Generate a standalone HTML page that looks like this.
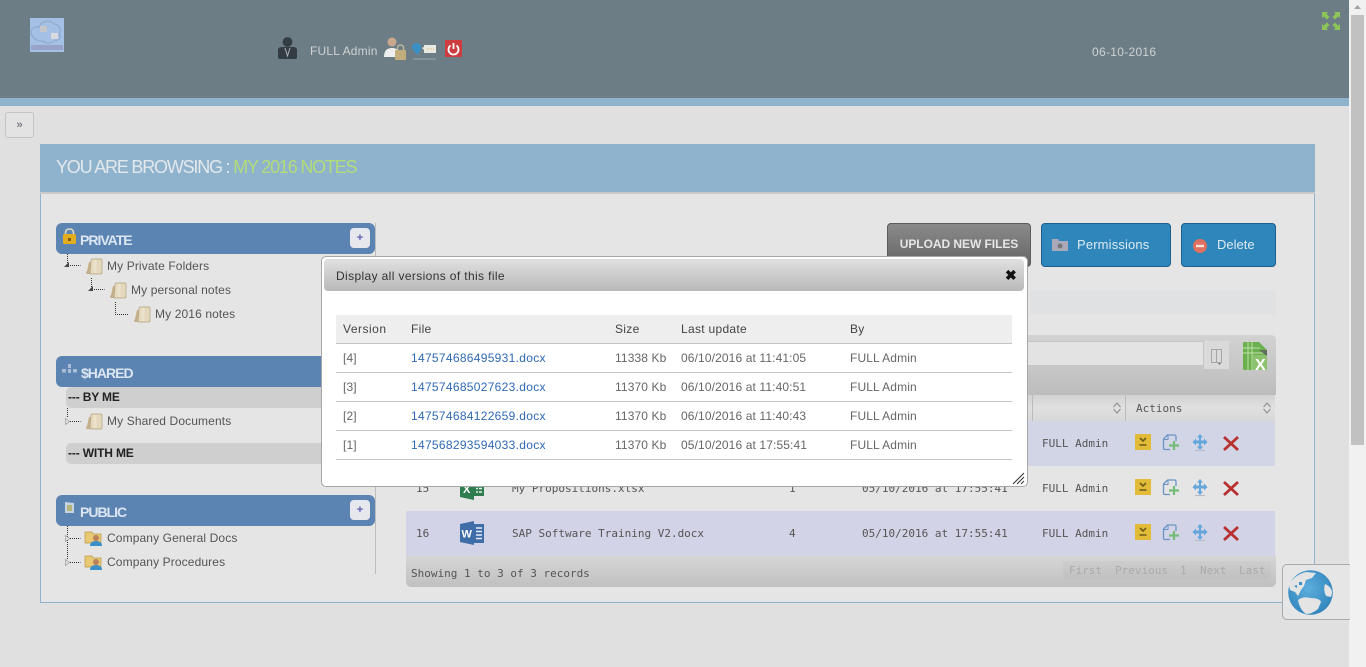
<!DOCTYPE html>
<html><head><meta charset="utf-8"><title>Files</title>
<style>
html,body{margin:0;padding:0;width:1366px;height:667px;overflow:hidden;background:#e0e0e0;font-family:"Liberation Sans",sans-serif;}
.a{position:absolute;white-space:nowrap;}
.bar{position:absolute;left:56px;width:319px;height:31px;background:#5c84b3;border-radius:6px;}
.bt{position:absolute;left:80px;color:#dce6f2;font-weight:bold;font-size:14px;letter-spacing:-1px;}
.plus{position:absolute;left:350px;width:20px;height:20px;background:#e6e8ee;border-radius:4px;color:#5c5cb0;font-size:11px;font-weight:bold;text-align:center;line-height:20px;}
.t{position:absolute;color:#555;font-size:12px;white-space:nowrap;letter-spacing:.12px;}
.sub{position:absolute;left:66px;width:270px;height:21px;background:#cfcfcf;border-radius:5px;color:#222;font-size:12px;font-weight:bold;line-height:21px;text-indent:2px;letter-spacing:-.15px;}
.m{position:absolute;font-family:"DejaVu Sans Mono","Liberation Mono",monospace;font-size:11px;color:#555;white-space:nowrap;}
.row{position:absolute;left:406px;width:869px;height:45px;}
.btn{position:absolute;top:223px;height:42px;background:#2f86ba;border:1px solid #1f5f8c;border-radius:4px;color:#dfeaf2;font-size:13px;line-height:41px;}
.dh{position:absolute;font-size:12px;color:#444;white-space:nowrap;letter-spacing:.3px;}
.dc{position:absolute;font-size:12px;color:#666;white-space:nowrap;letter-spacing:.12px;}
.dl{color:#2f69b5;letter-spacing:.3px;}
.ln{position:absolute;left:336px;width:676px;height:1px;background:#c4c4c4;}
svg{position:absolute;overflow:visible;}
</style></head><body>

<svg width="0" height="0" style="left:0;top:0"><defs>
<g id="fold"><path d="M0 15q0-1 1-2L3 4h3L5 16H1q-1 0-1-1z" fill="#c4b08a"/><path d="M5 2q0-1 1-1h9q1 0 1 1v13q0 1-1 1H4z" fill="#e3d8bd" stroke="#b5a582" stroke-width=".7"/><path d="M9 2v13" stroke="#f2ead6" stroke-width="3" opacity=".6"/></g>
<g id="cfold"><path d="M0 2h7l1 2h8v9H0z" fill="#e8c872" stroke="#b99a48" stroke-width=".7"/><circle cx="11" cy="8" r="3" fill="#b9825c"/><path d="M5 16q0-5 6-5t6 5z" fill="#3d8fc9"/></g>
<g id="acts">
<rect x="0" y="0" width="16" height="16" fill="#e2bb38"/><path d="M5 4l3 3 3-3M4.500 11h7" fill="none" stroke="#6d5a1c" stroke-width="1.600"/>
<path d="M35 15.500h-5q-1.500 0-1.500-1.500V5l4-4h7q1.500 0 1.500 1.500V7" fill="none" stroke="#6b94c4" stroke-width="1.300"/><path d="M29 5.500h4V1" fill="none" stroke="#6b94c4"/>
<path d="M39 7v9M34 11.500h10" stroke="#74bc78" stroke-width="2.200"/>
<path d="M65 0l3 3.500h-2v3h3v-2l3.500 3.500-3.500 3.500v-2h-3v3h2l-3 3.500-3-3.500h2v-3h-3v2L57.500 8 61 4.500v2h3v-3h-2z" fill="#63a6dc"/><path d="M60 16.500h10" stroke="#b6bcc8" stroke-width="1.200"/>
<path d="M89 3l14 13M103 3L89 16" stroke="#b8302f" stroke-width="2.800"/>
</g></defs></svg>

<!-- header -->
<div class="a" style="left:0;top:0;width:1349px;height:98px;background:#6c7d85;"></div>
<div class="a" style="left:0;top:98px;width:1349px;height:8px;background:#8fb3cc;"></div>
<svg style="left:30px;top:18px" width="34" height="34"><rect width="34" height="34" fill="#a4c0e4"/><path d="M1 15c-1-4 4-7 8-6 2-6 11-8 15-3 5 0 8 6 5 10 3 3 0 7-4 6-3 4-9 4-12 1-5 1-11-3-12-8z" fill="none" stroke="#8ea6c4"/><rect x="10" y="8" width="7" height="6" fill="#c5c5cc"/><rect x="21" y="15" width="7" height="6" fill="#d8dae0"/><rect x="1" y="27" width="32" height="5" fill="#97a4c8"/></svg>
<svg style="left:278px;top:37px" width="19" height="23"><circle cx="9.500" cy="5" r="4.900" fill="#333c42"/><path d="M0 13q0-3 4-3h11q4 0 4 3v7q0 2-2 2H2q-2 0-2-2z" fill="#333c42"/><path d="M7 11l2.500 8L12 11" fill="none" stroke="#a9b2b7"/></svg>
<div class="a" style="left:310px;top:44px;color:#cfd3d3;font-size:12px;letter-spacing:.2px;">FULL Admin</div>
<svg style="left:384px;top:37px" width="22" height="23"><circle cx="8" cy="5" r="4.500" fill="#c9a98e"/><path d="M0 20q0-9 8-9t8 9z" fill="#eee"/><path d="M13.500 14v-3q0-3 3-3t3 3v3" fill="none" stroke="#bcb59c" stroke-width="1.500"/><rect x="11" y="13" width="11" height="10" rx="1" fill="#c2ad7c"/></svg>
<svg style="left:412px;top:42px" width="26" height="20"><path d="M0 6q0-5 4.500-5T9 6q0 3-2 4l-.5 3q-4-2-6.500-7z" fill="#3a8fc4"/><path d="M10 6l2-1V3h12v8H12V8z" fill="#e9e9e3"/><path d="M15 7h1.500m1.500 0h1.500m1.500 0h1" stroke="#d8b95a"/><rect x="1" y="16.500" width="23" height="1" fill="#9ba8ae"/></svg>
<svg style="left:445px;top:40px" width="17" height="17"><rect width="17" height="17" fill="#cf3c40"/><path d="M5.500 5.500a5 5 0 1 0 6 0" fill="none" stroke="#fff" stroke-width="1.800"/><path d="M8.500 3v6" stroke="#fff" stroke-width="1.800"/></svg>
<div class="a" style="left:1092px;top:45px;color:#cfd3d3;font-size:12px;letter-spacing:.3px;">06-10-2016</div>
<svg style="left:1322px;top:12px" width="18" height="18"><g fill="#8dc45a"><path d="M0 0h6L4.500 1.800 7.500 5 5 7.500 1.800 4.500 0 6zM18 0v6l-1.800-1.500L13 7.500 10.500 5l3-3.200L12 0zM0 18v-6l1.800 1.500L5 10.500 7.500 13l-3 3.200L6 18zM18 18h-6l1.500-1.800-3-3.200L13 10.500l3.200 3L18 12z"/></g></svg>

<!-- scrollbar -->
<div class="a" style="left:1349px;top:0;width:17px;height:667px;background:#f1f1f1;"></div>
<div class="a" style="left:1351px;top:15px;width:13px;height:430px;background:#c1c1c1;"></div>
<svg style="left:1354px;top:5px" width="8" height="5"><path d="M0 4L3.500 0 7 4z" fill="#a3a3a3"/></svg>

<div class="a" style="left:5px;top:112px;width:27px;height:24px;background:#e3e3e3;border:1px solid #c4c4c4;border-radius:3px;text-align:center;color:#556;font-size:11px;line-height:24px;">»</div>

<!-- panel -->
<div class="a" style="left:40px;top:144px;width:1273px;height:458px;background:#e5e5e5;border:1px solid #8fb3cc;border-top:0;"></div>
<div class="a" style="left:40px;top:144px;width:1275px;height:48px;background:#8fb3cc;border-bottom:2px solid #c9c9c9;"></div>
<div class="a" style="left:56px;top:157px;font-size:18px;letter-spacing:-1.2px;color:#e3e8ec;">YOU ARE BROWSING : <span style="color:#b3dc7a;">MY 2016 NOTES</span></div>

<!-- sidebar -->
<div class="a" style="left:375px;top:223px;width:1px;height:351px;background:#bdbdbd;"></div>
<div class="bar" style="top:223px;"></div>
<svg style="left:62px;top:228px" width="15" height="17"><path d="M3.500 8V5q0-4 4-4t4 4v3" fill="none" stroke="#d9d9c8" stroke-width="1.600"/><rect x="1" y="6" width="13" height="10" rx="1.500" fill="#e2ae20"/><rect x="6" y="10" width="3" height="3" fill="#7a5b10"/></svg>
<div class="bt" style="top:232px;">PRIVATE</div><div class="plus" style="top:228px;">+</div>
<svg style="left:64px;top:254px" width="90" height="66"><path d="M3.500 0v11M6 11.500h10.500M27.500 24v11M30 35.500h10.500M51.500 48v12.500h13" fill="none" stroke="#333" stroke-dasharray="1 1"/><path d="M0 13L5 8v5zM24 37l5-5v5z" fill="#444"/></svg>
<svg style="left:86px;top:258px" width="16" height="16"><use href="#fold"/></svg>
<svg style="left:110px;top:282px" width="16" height="16"><use href="#fold"/></svg>
<svg style="left:134px;top:306px" width="16" height="16"><use href="#fold"/></svg>
<div class="t" style="left:107px;top:259px;">My Private Folders</div>
<div class="t" style="left:131px;top:283px;">My personal notes</div>
<div class="t" style="left:155px;top:307px;">My 2016 notes</div>

<div class="bar" style="top:356px;"></div>
<svg style="left:62px;top:364px" width="15" height="10"><g fill="#a9bdd8"><rect x="6" y="0" width="3" height="4"/><rect x="0" y="5" width="4" height="3.500"/><rect x="6" y="5" width="3" height="4"/><rect x="11" y="5" width="4" height="3.500"/></g></svg>
<div class="bt" style="top:365px;left:81px;">$HARED</div>
<div class="sub" style="top:387px;">--- BY ME</div>
<svg style="left:64px;top:408px" width="24" height="24"><path d="M3.500 0v10M6 13.500h10.500" fill="none" stroke="#333" stroke-dasharray="1 1"/><path d="M1.500 10.500l4 3-4 3z" fill="#e5e5e5" stroke="#999" stroke-width=".7"/></svg>
<svg style="left:86px;top:413px" width="16" height="16"><use href="#fold"/></svg>
<div class="t" style="left:107px;top:414px;">My Shared Documents</div>
<div class="sub" style="top:443px;">--- WITH ME</div>

<div class="bar" style="top:495px;"></div>
<svg style="left:64px;top:502px" width="11" height="12"><path d="M1 0l9 1v10H1z" fill="#c5d3e2"/><rect x="3" y="3" width="5" height="6" fill="#b3b47a"/></svg>
<div class="bt" style="top:504px;">PUBLIC</div><div class="plus" style="top:500px;">+</div>
<svg style="left:64px;top:526px" width="24" height="42"><path d="M3.500 0v34M6 12.500h10.500M6 36.500h10.500" fill="none" stroke="#333" stroke-dasharray="1 1"/><path d="M1.500 9.500l4 3-4 3zM1.500 33.500l4 3-4 3z" fill="#e5e5e5" stroke="#999" stroke-width=".7"/></svg>
<svg style="left:85px;top:530px" width="17" height="16"><use href="#cfold"/></svg>
<svg style="left:85px;top:554px" width="17" height="16"><use href="#cfold"/></svg>
<div class="t" style="left:107px;top:531px;">Company General Docs</div>
<div class="t" style="left:107px;top:555px;">Company Procedures</div>

<!-- buttons -->
<div class="btn" style="left:887px;width:142px;background:linear-gradient(#8a8a8a,#656565);border-color:#5c5c5c;color:#e6e6e6;font-weight:bold;font-size:12px;text-align:center;letter-spacing:-.05px;">UPLOAD NEW FILES</div>
<div class="btn" style="left:1041px;width:128px;"><span style="margin-left:35px;letter-spacing:.15px;">Permissions</span></div>
<svg style="left:1052px;top:238px" width="16" height="13"><path d="M0 1h6l1 2h9v10H0z" fill="#a9a9ba"/><circle cx="8" cy="8" r="2.500" fill="#777"/></svg>
<div class="btn" style="left:1181px;width:93px;"><span style="margin-left:35px;">Delete</span></div>
<svg style="left:1193px;top:239px" width="14" height="14"><circle cx="7" cy="7" r="7" fill="#e0705f"/><rect x="3" y="5.800" width="8" height="2.400" fill="#f4e4df"/></svg>
<div class="a" style="left:1030px;top:291px;width:246px;height:24px;background:#dfe1e3;"></div>

<!-- table -->
<div class="a" style="left:406px;top:335px;width:870px;height:60px;background:linear-gradient(#d2d2d2,#bdbdbd);border-radius:5px 5px 0 0;"></div>
<div class="a" style="left:1000px;top:341px;width:202px;height:23px;background:#e3e3e3;border:1px solid #c4c4c4;"></div>
<div class="a" style="left:1204px;top:341px;width:25px;height:28px;background:#dadada;"></div>
<svg style="left:1211px;top:349px" width="12" height="16"><path d="M.5.500h10v13h-10zM5.500.500v13" fill="none" stroke="#a5a5a5"/><path d="M7 14h3l-1.500 2z" fill="#777"/></svg>
<svg style="left:1243px;top:342px" width="25" height="28"><path d="M1 0h15l8 8v19q0 1-1 1H1q-1 0-1-1V1q0-1 1-1z" fill="#6cb04e"/><path d="M5 0v28M9 0v28M0 6h17M0 11h24" stroke="#bfe0ad" stroke-width="1"/><rect x="10" y="13" width="14" height="15" fill="#8cc26f"/><path d="M16 8l8 6V8z" fill="#5f6e5c"/><text x="12" y="28" font-family="Liberation Sans" font-size="16" font-weight="bold" fill="#fff">X</text></svg>
<div class="a" style="left:406px;top:395px;width:869px;height:26px;background:linear-gradient(#d2d2d2,#e0e0e0 50%,#d8d8d8);border-bottom:1px solid #bbb;"></div>
<div class="a" style="left:1032px;top:395px;width:1px;height:26px;background:#bbb;"></div>
<div class="a" style="left:1125px;top:395px;width:1px;height:26px;background:#bbb;"></div>
<div class="m" style="left:1136px;top:402px;">Actions</div>
<svg style="left:1113px;top:402px" width="8" height="12"><path d="M.5 5L4 1l3.500 4M.5 7L4 11l3.500-4" fill="none" stroke="#888"/></svg>
<svg style="left:1263px;top:402px" width="8" height="12"><path d="M.5 5L4 1l3.500 4M.5 7L4 11l3.500-4" fill="none" stroke="#888"/></svg>

<div class="row" style="top:421px;background:#d2d5e6;"></div>
<div class="row" style="top:511px;background:#d2d3e6;"></div>
<div class="m" style="left:416px;top:482px;">15</div>
<div class="m" style="left:416px;top:527px;">16</div>
<svg style="left:460px;top:476px" width="24" height="24"><path d="M0 3l14-3v24L0 21z" fill="#2f7d4f"/><rect x="14" y="5" width="10" height="15" fill="#2f7d4f"/><path d="M16 9h2m1 0h3M16 12.500h2m1 0h3M16 16h2m1 0h3" stroke="#e5f0e8" stroke-width="1.500"/><text x="3" y="17" font-family="Liberation Sans" font-size="11" font-weight="bold" fill="#fff">X</text></svg>
<svg style="left:460px;top:521px" width="24" height="24"><path d="M0 3l14-3v24L0 21z" fill="#3e6da8"/><rect x="14" y="3" width="10" height="19" fill="#3e6da8"/><path d="M16 7h6M16 10.500h6M16 14h6M16 17.500h6" stroke="#e5ecf5" stroke-width="1.500"/><text x="1.500" y="16.500" font-family="Liberation Sans" font-size="11" font-weight="bold" fill="#fff">W</text></svg>
<div class="m" style="left:512px;top:482px;">My Propositions.xlsx</div>
<div class="m" style="left:512px;top:527px;">SAP Software Training V2.docx</div>
<div class="m" style="left:789px;top:482px;">1</div>
<div class="m" style="left:789px;top:527px;">4</div>
<div class="m" style="left:862px;top:482px;">05/10/2016 at 17:55:41</div>
<div class="m" style="left:862px;top:527px;">05/10/2016 at 17:55:41</div>
<div class="m" style="left:1042px;top:437px;">FULL Admin</div>
<div class="m" style="left:1042px;top:482px;">FULL Admin</div>
<div class="m" style="left:1042px;top:527px;">FULL Admin</div>

<svg style="left:1135px;top:434px" width="120" height="18"><use href="#acts"/></svg>
<svg style="left:1135px;top:479px" width="120" height="18"><use href="#acts"/></svg>
<svg style="left:1135px;top:524px" width="120" height="18"><use href="#acts"/></svg>

<div class="a" style="left:406px;top:556px;width:870px;height:31px;background:linear-gradient(#d6d6d6,#c0c0c0);border-radius:0 0 5px 5px;"></div>
<div class="m" style="left:411px;top:567px;">Showing 1 to 3 of 3 records</div>
<div class="a" style="left:1063px;top:561px;width:208px;height:18px;background:rgba(0,0,0,.025);border-radius:2px;"></div>
<div class="m" style="left:1069px;top:564px;color:#aaa;">First</div>
<div class="m" style="left:1115px;top:564px;color:#aaa;">Previous</div>
<div class="m" style="left:1180px;top:564px;color:#aaa;">1</div>
<div class="m" style="left:1200px;top:564px;color:#aaa;">Next</div>
<div class="m" style="left:1239px;top:564px;color:#aaa;">Last</div>

<!-- dialog -->
<div class="a" style="left:321px;top:256px;width:705px;height:229px;background:#fff;border:1px solid #a6a6a6;border-radius:5px;"></div>
<div class="a" style="left:324px;top:259px;width:700px;height:32px;background:linear-gradient(#e0e0e0,#b9b9b9);border-radius:4px;"></div>
<div class="a" style="left:336px;top:269px;font-size:12px;color:#333;letter-spacing:.37px;">Display all versions of this file</div>
<div class="a" style="left:1005px;top:267px;font-size:14px;font-weight:bold;color:#111;line-height:16px;">✖</div>
<div class="a" style="left:336px;top:315px;width:676px;height:28px;background:#eeeeee;"></div>
<div class="dh" style="left:343px;top:322px;letter-spacing:.5px;">Version</div><div class="dh" style="left:411px;top:322px;">File</div><div class="dh" style="left:615px;top:322px;">Size</div><div class="dh" style="left:681px;top:322px;">Last update</div><div class="dh" style="left:850px;top:322px;">By</div>
<div class="ln" style="top:343px;"></div><div class="ln" style="top:372px;"></div><div class="ln" style="top:401px;"></div><div class="ln" style="top:430px;"></div><div class="ln" style="top:459px;"></div>

<div class="dc" style="left:343px;top:351px;">[4]</div><div class="dc dl" style="left:411px;top:351px;">147574686495931.docx</div><div class="dc" style="left:615px;top:351px;">11338 Kb</div><div class="dc" style="left:681px;top:351px;">06/10/2016 at 11:41:05</div><div class="dc" style="left:850px;top:351px;">FULL Admin</div>
<div class="dc" style="left:343px;top:380px;">[3]</div><div class="dc dl" style="left:411px;top:380px;">147574685027623.docx</div><div class="dc" style="left:615px;top:380px;">11370 Kb</div><div class="dc" style="left:681px;top:380px;">06/10/2016 at 11:40:51</div><div class="dc" style="left:850px;top:380px;">FULL Admin</div>
<div class="dc" style="left:343px;top:409px;">[2]</div><div class="dc dl" style="left:411px;top:409px;">147574684122659.docx</div><div class="dc" style="left:615px;top:409px;">11370 Kb</div><div class="dc" style="left:681px;top:409px;">06/10/2016 at 11:40:43</div><div class="dc" style="left:850px;top:409px;">FULL Admin</div>
<div class="dc" style="left:343px;top:438px;">[1]</div><div class="dc dl" style="left:411px;top:438px;">147568293594033.docx</div><div class="dc" style="left:615px;top:438px;">11370 Kb</div><div class="dc" style="left:681px;top:438px;">05/10/2016 at 17:55:41</div><div class="dc" style="left:850px;top:438px;">FULL Admin</div>
<svg style="left:1012px;top:472px" width="13" height="13"><path d="M12 1L1 12M12 5L5 12M12 9L9 12" stroke="#333" stroke-width="1"/></svg>

<!-- globe -->
<div class="a" style="left:1282px;top:564px;width:67px;height:54px;background:#e6e6e6;border:1px solid #aaa;border-right:0;border-radius:5px 0 0 5px;"></div>
<svg style="left:1288px;top:570px" width="45" height="45"><defs><radialGradient id="gl" cx=".45" cy=".4" r=".7"><stop offset="0" stop-color="#5eaedd"/><stop offset="1" stop-color="#2b80b8"/></radialGradient></defs><circle cx="22.500" cy="22.500" r="22.300" fill="url(#gl)"/><path d="M1 15Q6 5 18 2l10 1-4 5-6 2-2 6-3 4-3 6-3-4-5-2zM10 30q5-4 12-2 10 0 11 4l-3 7q-6 5-12 5-6-4-8-14zM37 14q7 3 7 9l-1 4-5-1q-3-6-1-12z" fill="#e4e4e4"/><path d="M6 16l3-1v3zM11 12h3v3h-3z" fill="#3a8fc4"/></svg>
</body></html>
